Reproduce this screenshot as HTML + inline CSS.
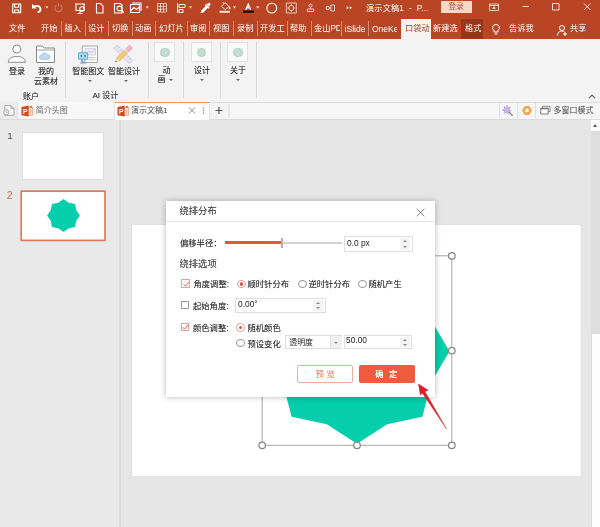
<!DOCTYPE html>
<html lang="zh-CN">
<head>
<meta charset="utf-8">
<title>绕排分布</title>
<style>
html,body{margin:0;padding:0;background:#e6e6e6;}
body{width:600px;height:527px;overflow:hidden;font-family:"Liberation Sans","Noto Sans CJK SC",sans-serif;}
#root{position:relative;width:600px;height:527px;overflow:hidden;background:#e6e6e6;will-change:transform;}
.a{position:absolute;}
.t{position:absolute;white-space:nowrap;line-height:1;}
/* header */
#hdr{left:0;top:0;width:600px;height:39.5px;background:#b94525;}
.tab{position:absolute;top:24.3px;font-size:8.2px;color:#fff;white-space:nowrap;line-height:10px;}
.tsep{position:absolute;top:21px;width:1px;height:15px;background:#d98a73;}
/* ribbon */
#rib{left:0;top:39px;width:600px;height:63px;background:#f3f3f3;}
.rl{position:absolute;text-shadow:0 0 .5px rgba(0,0,0,.4);font-size:8px;color:#333;white-space:nowrap;line-height:10px;text-align:center;}
.rsep{position:absolute;top:42px;width:1px;height:56px;background:#d8d8d8;}
.ibox{position:absolute;top:42px;width:21px;height:19.500px;background:#fafafa;border:1px solid #e2e2e2;box-sizing:border-box;}
.ibox i{position:absolute;left:5px;top:4.500px;width:9.500px;height:9.500px;border-radius:50%;background:#c3dfd2;border:1px solid #a9cdbd;box-sizing:border-box;}
.dd{position:absolute;width:0;height:0;border-left:2px solid transparent;border-right:2px solid transparent;border-top:2.5px solid #666;}
/* doc tabs */
#dtb{left:0;top:102px;width:600px;height:17px;background:#f4f4f4;border-bottom:1px solid #dadada;}
/* dialog */
#dlg{left:166px;top:201px;width:268.600px;height:195.700px;background:#fff;box-shadow:0 0 6px rgba(0,0,0,.28);}
.dl{position:absolute;text-shadow:0 0 .5px rgba(0,0,0,.35);font-size:8.3px;color:#2b2b2b;white-space:nowrap;line-height:10px;}
.cb{position:absolute;width:8.5px;height:8.5px;border:1px solid #9a9a9a;box-sizing:border-box;background:#fff;}
.cb.on{border-color:#dda59c;}
.rd{position:absolute;width:8.5px;height:8.5px;border:1px solid #999;border-radius:50%;box-sizing:border-box;background:#fff;}
.rd.on{border-color:#d9a39b;}
.rd.on::after{content:"";position:absolute;left:1.5px;top:1.5px;width:3.5px;height:3.5px;border-radius:50%;background:#e5553f;}
.sp{position:absolute;height:15px;border:1px solid #dfdfdf;box-sizing:border-box;background:#fff;font-size:8.600px;color:#222;line-height:13px;}
.sp span{position:absolute;left:3px;top:0;}
.sp .nm{font-size:9.300px;transform:scaleX(.9);transform-origin:0 50%;}
.sb{position:absolute;top:1px;bottom:1px;width:10px;background:#f4f4f4;}
.au,.ad{position:absolute;width:0;height:0;border-left:2.100px solid transparent;border-right:2.100px solid transparent;}
.au{border-bottom:2.700px solid #8a8a8a;}
.ad{border-top:2.700px solid #8a8a8a;}
</style>
</head>
<body>
<div id="root">

<!-- ================= HEADER ================= -->
<div id="hdr" class="a"></div>
<svg class="a" style="left:0;top:0" width="600" height="18" viewBox="0 0 600 18" fill="none" stroke="#fff" stroke-width="1.1">
  <!-- save -->
  <path d="M12.700 4h8v8.800h-8z M14.700 4v3.300h4v-3.300 M14.700 12.800v-2.800h4v2.800"/>
  <!-- undo -->
  <path d="M33.500 7c3-2 6.800-1 7 2.300c0 1.800-1.300 2.900-3 3" stroke-width="1.800"/>
  <path d="M32 3.800v4.700h4.700z" fill="#fff" stroke="none"/>
  <path d="M45.300 6.500h3l-1.500 2z" fill="#fff" stroke="none"/>
  <!-- redo dim -->
  <path d="M60.5 5a3.6 3.6 0 1 1-4 0 M58.5 3v3.5" stroke="#cf7e66" stroke-width="1.1"/>
  <!-- slideshow -->
  <path d="M75 4h10 M76 4.5v6h8v-6 M80 10.5v2.5 M77.5 13.5h5" />
  <circle cx="82" cy="9" r="2.3"/>
  <!-- new doc -->
  <path d="M96.5 3.5h4l2.5 2.5v7h-6.5z"/>
  <!-- preview -->
  <path d="M114.5 3.5h6l1.5 1.5v8h-7.500z"/>
  <circle cx="119.5" cy="8.500" r="2.400"/>
  <path d="M121.3 10.300l2.500 2.500" stroke-width="1.4"/>
  <!-- image icon -->
  <path d="M130.500 4.500h9v8h-9z M132 3h9v8 M131 10.500l3-3 2.500 2 3-2.500"/>
  <path d="M145.800 6.500h3l-1.500 2z" fill="#fff" stroke="none"/>
  <!-- grid -->
  <path d="M157.500 3.500h9v8.500h-9z M157.500 6.300h9 M157.500 9.200h9 M160.500 3.500v8.500 M163.500 3.500v8.500" stroke-width=".8" stroke-opacity=".8"/>
  <!-- align flag -->
  <path d="M177.500 3v10 M179 4.500h6v3h-6z M179 9.500h4v3h-4z" stroke-width="1"/>
  <path d="M189 6.500h3l-1.500 2z" fill="#fff" stroke="none"/>
  <!-- pen -->
  <path d="M200.600 13.200l.8-2.800 4.800-4.800 2 2-4.800 4.800z" fill="#fff" stroke="none"/><path d="M206.800 4.400l1.300-1.300a1.500 1.500 0 0 1 2.100 2.100l-1.300 1.300z" fill="#fff" stroke="none"/><path d="M205.300 4.300l4 4" stroke-width="1.300"/>
  <!-- bucket -->
  <path d="M221.500 6.300l3.600-3.600 3.800 3.800-3.600 3.200z M224 3.800l-1-1.600" stroke-width=".9" stroke-opacity=".9"/>
  <path d="M229.600 6.300c.7 1.100 .9 1.600 .9 2.100a.9 .9 0 0 1-1.800 0c0-.5.200-1 .9-2.100z" fill="#fff" fill-opacity=".9" stroke="none"/>
  <path d="M219.500 10.800h10.300v2h-10.300z" fill="#f7e4d9" stroke="none"/>
  <path d="M233 6.500h3l-1.500 2z" fill="#fff" stroke="none"/>
  <!-- font color A -->
  <path d="M245.800 9.800l2.400-5.600 2.400 5.600 M246.800 7.900h2.800" stroke-width="1.300"/>
  <path d="M243 10.500h10.800v2.300h-10.800z" fill="#1a0a06" stroke="none"/>
  <path d="M256.200 6.500h3l-1.500 2z" fill="#fff" stroke="none"/>
  <!-- circle -->
  <circle cx="271.800" cy="8.100" r="4.900"/>
  <!-- focus icon -->
  <g stroke-opacity=".85" stroke-width=".8"><path d="M286.300 3h10v10h-10z"/><rect x="289" y="5.700" width="4.600" height="4.600" rx="1.200"/>
  <path d="M291.300 4v1.700 M291.300 10.300v1.700 M287.300 8h1.700 M293.600 8h1.700"/></g>
  <!-- org icon -->
  <g stroke-opacity=".9" stroke-width=".8"><circle cx="310.500" cy="5.400" r="1.500"/>
  <path d="M307.300 11.500v-2.500h6.400v2.500z M310.500 7v2"/></g>
  <!-- link icon -->
  <path d="M326.300 6.500h2.700v3h-2.700z M330.800 5h3.700v6h-3.700z M329 8h1.800" stroke-width=".8" stroke-opacity=".9"/>
  <!-- more -->
  <path d="M346.800 6.200l2 1.600-2 1.600z M349.800 6.200l2 1.600-2 1.600z" fill="#fff" stroke="none"/>
  <!-- ribbon display -->
  <path d="M489.500 4h9v6.500h-9z M489.500 5.500h9" stroke-width=".8" stroke-opacity=".9"/>
  <path d="M494 6.300l1.800 2.400h-3.600z" fill="#fff" stroke="none"/>
  <!-- window controls -->
  <path d="M522.500 6.500h6.500" stroke-width=".9" stroke-opacity=".9"/>
  <path d="M552.500 3.500h6.500v6.500h-6.500z" stroke-width=".9" stroke-opacity=".9"/>
  <path d="M584 3.500l6.500 6.500 M590.500 3.500l-6.500 6.500" stroke-width=".9" stroke-opacity=".9"/>
</svg>
<div class="t" style="left:366px;top:3.5px;font-size:8.2px;color:#fff;line-height:10px;word-spacing:2.5px;letter-spacing:.15px;">演示文稿1 - P...</div>
<div class="a" style="left:440.600px;top:1px;width:31px;height:12px;background:#fbd7c8;"></div>
<div class="t" style="left:448.200px;top:2.300px;font-size:7.900px;color:#bd5234;line-height:10px;">登录</div>

<!-- ribbon tabs -->
<div class="tab" style="left:9px">文件</div>
<div class="tab" style="left:41px">开始</div>
<div class="tsep" style="left:61px"></div>
<div class="tab" style="left:64.500px">插入</div>
<div class="tsep" style="left:85px"></div>
<div class="tab" style="left:88px">设计</div>
<div class="tsep" style="left:108px"></div>
<div class="tab" style="left:112px">切换</div>
<div class="tsep" style="left:132px"></div>
<div class="tab" style="left:135px">动画</div>
<div class="tsep" style="left:155px"></div>
<div class="tab" style="left:159px">幻灯片</div>
<div class="tsep" style="left:187px"></div>
<div class="tab" style="left:190px">审阅</div>
<div class="tsep" style="left:209px"></div>
<div class="tab" style="left:213px">视图</div>
<div class="tsep" style="left:233px"></div>
<div class="tab" style="left:237px">录制</div>
<div class="tsep" style="left:257px"></div>
<div class="tab" style="left:260px">开发工</div>
<div class="tsep" style="left:287px"></div>
<div class="tab" style="left:290px">帮助</div>
<div class="tsep" style="left:311px"></div>
<div class="tab" style="left:314px;width:26px;overflow:hidden">金山PD</div>
<div class="tsep" style="left:341px"></div>
<div class="tab" style="left:344.500px;font-size:8.600px">iSlide</div>
<div class="tsep" style="left:368px"></div>
<div class="tab" style="left:372px;width:25px;overflow:hidden;font-size:8.500px">OneKe</div>
<div class="a" style="left:400.5px;top:19px;width:30.5px;height:21px;background:#f5f2f1;"></div>
<div class="tab" style="left:405px;color:#9c3a1f;width:24px;overflow:hidden;">口袋动</div>
<div class="tab" style="left:433px">新建选</div>
<div class="a" style="left:461px;top:19px;width:22px;height:20.500px;background:#9a3519;"></div>
<div class="tab" style="left:465px">格式</div>
<svg class="a" style="left:488px;top:21.500px" width="112" height="18" viewBox="0 0 112 18" fill="none" stroke="#fff" stroke-width="1">
  <path d="M8 2.500a3.300 3.300 0 0 1 2 6v1.500h-4v-1.500a3.300 3.300 0 0 1 2-6z M6.500 12h3"/>
  <circle cx="74" cy="6" r="2.500"/>
  <path d="M69.500 13.500c0-3 2-4.500 4.500-4.500 1 0 2 .300 2.500.800 M77 10v4 M75 12h4"/>
</svg>
<div class="tab" style="left:509px">告诉我</div>
<div class="tab" style="left:570px">共享</div>

<!-- ================= RIBBON ================= -->
<div id="rib" class="a"></div>
<svg class="a" style="left:0;top:39px" width="150" height="30" viewBox="0 39 150 30" fill="none">
  <!-- person -->
  <circle cx="16.800" cy="49" r="4" stroke="#8a8a8a" fill="#fff" stroke-width="1"/>
  <path d="M8.300 62.300c0-4 3.500-5.800 8.500-5.800s8.500 1.800 8.500 5.800z" stroke="#8a8a8a" fill="#fff" stroke-width="1"/>
  <!-- folder -->
  <path d="M36.500 62.500v-16.500h6l1.500 2h10.500v14.500z" stroke="#8a8a8a" fill="#fdfdfd" stroke-width="1"/>
  <path d="M36.500 50h18" stroke="#8a8a8a" stroke-width=".8"/>
  <path d="M41 59.500a2.300 2.300 0 0 1 .6-4.500 3 3 0 0 1 5.600-.500 2.600 2.600 0 0 1 1.300 5z" fill="#bcd6ee" stroke="#9dbfe0" stroke-width=".6"/>
  <!-- smart pic -->
  <path d="M82.300 46h15.200v16.500h-15.200z" fill="#fff" stroke="#9c9c9c" stroke-width=".9"/>
  <path d="M85 48.400h10.600v6.600h-10.600z" fill="#ece9f6" stroke="#b3aed0" stroke-width=".5"/>
  <path d="M85.500 53.500l3-2.500 2.500 1.500 4-3" fill="none" stroke="#a9a3cc" stroke-width=".5"/>
  <path d="M88.500 57.500h7 M88.500 59.800h7" stroke="#b4b4b4" stroke-width=".8"/>
  <path d="M78.700 52.800h9v6.400h-9z" fill="#aadcf1" stroke="#5b9fcc" stroke-width=".9"/>
  <circle cx="81.400" cy="55.900" r=".9" fill="#2f6d96"/><circle cx="85" cy="55.900" r=".9" fill="#2f6d96"/>
  <path d="M81.500 59.200v2.800h3.400v-2.800 M80 63h6.400" fill="none" stroke="#5b9fcc" stroke-width=".9"/>
  <!-- smart design -->
  <g transform="translate(123.300 54.300) rotate(45)">
    <rect x="-10.800" y="-2.400" width="21.600" height="4.800" fill="#e6e4f3" stroke="#b6b1d4" stroke-width=".5"/>
    <path d="M-8 -2.400v2 M-5 -2.400v2 M-2 -2.400v2 M5 -2.400v2 M8 -2.400v2" stroke="#b6b1d4" stroke-width=".5"/>
  </g>
  <g transform="translate(123.300 54.300) rotate(-45)">
    <rect x="5.500" y="-2.200" width="5.500" height="4.400" rx=".8" fill="#f3b4c6" stroke="#d990a8" stroke-width=".4"/>
    <rect x="3.500" y="-2.200" width="2" height="4.400" fill="#d9d6ea"/>
    <rect x="-7.500" y="-2.200" width="11" height="4.400" fill="#f6c874" stroke="#dca94e" stroke-width=".4"/>
    <path d="M-7.500 -2.200l-3.500 2.200 3.500 2.200z" fill="#f8e6c6" stroke="#d4b98a" stroke-width=".3"/>
    <path d="M-9.600 -.900l-1.700 .900 1.700 .900z" fill="#666"/>
  </g>
</svg>
<div class="rl" style="left:9px;top:67px;">登录</div>
<div class="rl" style="left:34px;top:67px;width:24px;">我的<br>云素材</div>
<div class="rl" style="left:23px;top:91.500px;color:#3c3c3c;">账户</div>
<div class="rsep" style="left:64.500px"></div>
<div class="rl" style="left:72.200px;top:67px;">智能图文</div>
<div class="rl" style="left:108px;top:67px;">智能设计</div>
<div class="dd" style="left:88px;top:80px"></div>
<div class="dd" style="left:123.500px;top:80px"></div>
<div class="rl" style="left:92.500px;top:91.300px;color:#3c3c3c;">AI 设计</div>
<div class="rsep" style="left:147.500px"></div>
<div class="ibox" style="left:154px"><i></i></div>
<div class="rl" style="left:162.500px;top:65.500px;">动</div>
<div class="rl" style="left:157.500px;top:75.200px;">画</div>
<div class="dd" style="left:168.500px;top:78.800px"></div>
<div class="rsep" style="left:183px"></div>
<div class="ibox" style="left:190.500px"><i></i></div>
<div class="rl" style="left:194px;top:65.500px;">设计</div>
<div class="dd" style="left:199.500px;top:78.500px"></div>
<div class="rsep" style="left:219.500px"></div>
<div class="ibox" style="left:227px"><i></i></div>
<div class="rl" style="left:230px;top:65.500px;">关于</div>
<div class="dd" style="left:236px;top:78.500px"></div>
<div class="rsep" style="left:256px"></div>
<svg class="a" style="left:588px;top:93px" width="8" height="7" viewBox="0 0 8 7" fill="none" stroke="#6a6a6a" stroke-width="1.100"><path d="M1 5l3-3 3 3"/></svg>

<!-- ================= DOC TABS ================= -->
<div id="dtb" class="a"></div>
<div class="a" style="left:229.500px;top:102px;width:370.500px;height:17px;background:#f6f6f6;"></div>
<div class="a" style="left:0;top:101.700px;width:600px;height:1px;background:#dcdcdc;"></div>
<div class="a" style="left:0;top:102px;width:17px;height:17px;background:#ececec;"></div>
<svg class="a" style="left:2px;top:104px" width="14" height="13" viewBox="2 104 14 13" fill="none" stroke="#a2a2a2" stroke-width=".9">
  <path d="M4.800 105.600h6.200l3 3v6.800h-9.200z M11 105.600v3h3" fill="#f6f6f6"/><circle cx="6.300" cy="112.200" r="2.600" fill="#f4f4f4"/><path d="M6.300 110.800v1.500h1.300" stroke-width=".7"/>
</svg>
<div class="a" style="left:17px;top:102px;width:97px;height:17px;background:#f8f8f8;border-left:1px solid #e0e0e0;box-sizing:border-box;"></div>
<svg class="a" style="left:20.500px;top:104.500px" width="12" height="12" viewBox="-.5 0 12 12"><rect x="6" y="2.300" width="4.800" height="8" fill="#fbe9e2" stroke="#ee8a66" stroke-width=".7"/><rect x="8.600" y="4.800" width="1" height="4" fill="#f0a588"/><circle cx="9.600" cy="1.900" r="1.100" fill="#e8693f"/><path d="M0 2l7.200-1.400v11l-7.200-1.400z" fill="#d6481f"/><text x="1.300" y="8.900" font-size="7.200" font-weight="bold" fill="#fff" font-family="Liberation Sans,sans-serif">P</text></svg>
<div class="t" style="left:35.800px;top:105.500px;font-size:8px;color:#6a6a6a;line-height:10px;">简介头图</div>
<div class="a" style="left:114px;top:102.300px;width:96px;height:17.700px;background:#fff;border-top:1.200px solid #e69a78;box-sizing:border-box;border-left:1px solid #e3e3e3;border-right:1px solid #e3e3e3;"></div>
<svg class="a" style="left:117px;top:104.500px" width="12" height="12" viewBox="-.5 0 12 12"><rect x="6" y="2.300" width="4.800" height="8" fill="#fbe9e2" stroke="#ee8a66" stroke-width=".7"/><rect x="8.600" y="4.800" width="1" height="4" fill="#f0a588"/><circle cx="9.600" cy="1.900" r="1.100" fill="#e8693f"/><path d="M0 2l7.200-1.400v11l-7.200-1.400z" fill="#d6481f"/><text x="1.300" y="8.900" font-size="7.200" font-weight="bold" fill="#fff" font-family="Liberation Sans,sans-serif">P</text></svg>
<div class="t" style="left:131px;top:105.500px;font-size:8px;color:#444;line-height:10px;">演示文稿1</div>
<svg class="a" style="left:187px;top:104px" width="46" height="13" viewBox="0 0 46 13" fill="none" stroke="#777" stroke-width=".9">
  <path d="M2 3.500l6 6 M8 3.500l-6 6"/>
  <path d="M16.500 3.500v1.200 M16.500 6v1.200 M16.500 8.500v1.200" stroke-width="1.200"/>
  <path d="M28.500 6.500h7 M32 3v7" stroke="#555" stroke-width="1.200"/>
  <path d="M42 0v13" stroke="#d5d5d5" stroke-width="1"/>
</svg>
<div class="a" style="left:499px;top:103px;width:1px;height:15px;background:#e0e0e0;"></div>
<div class="a" style="left:517px;top:103px;width:1px;height:15px;background:#e0e0e0;"></div>
<div class="a" style="left:535px;top:103px;width:1px;height:15px;background:#e0e0e0;"></div>
<svg class="a" style="left:502px;top:104px" width="50" height="13" viewBox="0 0 50 13" fill="none">
  <path d="M5 1.300l1 2.300 2.500-.5-1.300 2.200 1.800 1.800-2.500.3-.3 2.500-1.800-1.800-2.200 1.300.5-2.500-2.300-1 2.300-1-.5-2.500 2.200 1.300z" fill="#cbb6e8" stroke="#a88dd2" stroke-width=".5"/>
  <path d="M6.800 7.800l3.800 3.800" stroke="#77707f" stroke-width="1.200"/>
  <polygon points="29.50,6.50 27.25,10.40 22.75,10.40 20.50,6.50 22.75,2.60 27.25,2.60" fill="#f3a555" stroke="#f3a555" stroke-width="1" stroke-linejoin="round"/>
  <circle cx="25" cy="6.500" r="1.900" fill="#fdf3e6"/>
  <path d="M40.500 4v-1.700h7.500v5.200h-1.500" stroke="#7a7a7a" stroke-width=".9"/>
  <path d="M38.800 4.300h7.400v5.700h-7.400z" fill="#fff" stroke="#6e6e6e" stroke-width=".9"/>
  <path d="M38.800 4.600h7.400" stroke="#6e6e6e" stroke-width="1.300"/>
</svg>
<div class="t" style="left:553.500px;top:105.500px;font-size:8px;color:#444;line-height:10px;">多窗口模式</div>

<!-- ================= MAIN ================= -->
<div class="a" style="left:0;top:120px;width:119px;height:407px;background:#e9e9ea;"></div>
<div class="a" style="left:119px;top:120px;width:2px;height:407px;background:#dbdbdb;"></div>
<div class="t" style="left:7.300px;top:131.200px;font-size:9.800px;color:#505050;">1</div>
<div class="a" style="left:22.800px;top:132.700px;width:80.600px;height:46px;background:#fff;outline:.5px solid #dedede;"></div>
<div class="t" style="left:6.700px;top:190.200px;font-size:10.500px;color:#d2704f;">2</div>
<svg class="a" style="left:19px;top:189px" width="89" height="54" viewBox="19 189 89 54"><rect x="21.200" y="191.200" width="83.800" height="49.200" fill="#fff" stroke="#df7a59" stroke-width="1.700"/></svg>
<svg class="a" style="left:43px;top:195px" width="41" height="41" viewBox="-20.500 -20.500 41 41"><path d="M16.40 0.00L12.75 5.28L11.60 11.60L5.28 12.75L0.00 16.40L-5.28 12.75L-11.60 11.60L-12.75 5.28L-16.40 0.00L-12.75 -5.28L-11.60 -11.60L-5.28 -12.75L-0.00 -16.40L5.28 -12.75L11.60 -11.60L12.75 -5.28z" fill="#05ceac"/></svg>

<!-- scrollbar -->
<div class="a" style="left:591.400px;top:120px;width:8.600px;height:11px;background:#fdfdfd;"></div>
<div class="a" style="left:591.400px;top:131px;width:8.600px;height:203px;background:#dedede;"></div>
<div class="a" style="left:591.400px;top:334px;width:8.600px;height:193px;background:#fdfdfd;"></div>
<div class="a" style="left:591px;top:334px;width:.8px;height:193px;background:#dadada;"></div>
<div class="a" style="left:593.300px;top:124.300px;width:0;height:0;border-left:2.600px solid transparent;border-right:2.600px solid transparent;border-bottom:3.200px solid #5a5a5a;"></div>

<!-- slide -->
<svg class="a" style="left:130px;top:223px" width="453" height="255" viewBox="130 223 453 255"><rect x="131.700" y="224.500" width="449.400" height="252.200" fill="#fff" stroke="#d6d6d6" stroke-width=".6"/></svg>
<svg class="a" style="left:240px;top:240px" width="230" height="220" viewBox="240 240 230 220">
  <path d="M449.5 351.3L431.4 382.1L422.4 416.7L387.2 424.3L357.0 443.8L326.8 424.3L291.6 416.7L282.6 382.1L264.5 351.3L282.6 320.5L291.6 285.9L326.8 278.3L357.0 258.8L387.2 278.3L422.4 285.9L431.4 320.5z" fill="#05ceac"/>
  <path d="M262.200 255.800h189.600v189.500h-189.600z" fill="none" stroke="#a6a6a6" stroke-width="1"/>
  <g fill="#fff" stroke="#858585" stroke-width="1.250">
    <circle cx="262.200" cy="255.800" r="3.300"/><circle cx="357" cy="255.800" r="3.300"/><circle cx="451.800" cy="255.800" r="3.300"/>
    <circle cx="262.200" cy="350.600" r="3.300"/><circle cx="451.800" cy="350.600" r="3.300"/>
    <circle cx="262.200" cy="445.300" r="3.300"/><circle cx="357" cy="445.300" r="3.300"/><circle cx="451.800" cy="445.300" r="3.300"/>
  </g>
</svg>

<!-- ================= DIALOG ================= -->
<div id="dlg" class="a">
  <div class="dl" style="left:13.500px;top:3.800px;font-size:9.300px;line-height:12px;color:#444;">绕排分布</div>
  <svg class="a" style="left:250px;top:6.500px" width="9" height="9" viewBox="0 0 9 9" stroke="#777" stroke-width=".9" fill="none"><path d="M.7.7l7.600 7.600 M8.300.7l-7.600 7.600"/></svg>
  <div class="a" style="left:0;top:20px;width:269px;height:1px;background:#e6e6e6;"></div>

  <div class="dl" style="left:14px;top:37px;">偏移半径：</div>
  <div class="a" style="left:59px;top:41px;width:117px;height:2px;background:#d2d2d2;"></div>
  <div class="a" style="left:59px;top:40.300px;width:56px;height:3px;background:#e5553f;"></div>
  <div class="a" style="left:114.800px;top:37px;width:2.200px;height:9.500px;background:#b2b2b2;"></div>
  <div class="sp" style="left:177.500px;top:35px;width:69.500px;height:16px;"><span class="nm" style="top:-.2px;left:2.300px">0.0 px</span><b class="sb" style="left:55.500px"></b><i class="au" style="left:58.300px;top:3.300px"></i><i class="ad" style="left:58.300px;top:9.300px"></i></div>

  <div class="dl" style="left:13.500px;top:57px;font-size:9.300px;line-height:12px;color:#444;">绕排选项</div>

  <div class="cb on" style="left:15.200px;top:78.300px;"></div>
  <svg class="a" style="left:15.500px;top:78.500px" width="8" height="8" viewBox="0 0 8 8" fill="none" stroke="#e5553f" stroke-width=".95"><path d="M1.600 4.200l2 2 3.200-4.200"/></svg>
  <div class="dl" style="left:27.500px;top:78px;">角度调整:</div>
  <div class="rd on" style="left:71px;top:78.500px;"></div>
  <div class="dl" style="left:81.500px;top:78px;">顺时针分布</div>
  <div class="rd" style="left:132px;top:78.500px;"></div>
  <div class="dl" style="left:142.500px;top:78px;">逆时针分布</div>
  <div class="rd" style="left:192px;top:78.500px;"></div>
  <div class="dl" style="left:202.500px;top:78px;">随机产生</div>

  <div class="cb" style="left:14.800px;top:99.500px;"></div>
  <div class="dl" style="left:27px;top:99.500px;">起始角度:</div>
  <div class="sp" style="left:68.500px;top:96.500px;width:91px;height:15px;"><span class="nm" style="top:-.3px;left:2.500px">0.00°</span><b class="sb" style="left:77.500px"></b><i class="au" style="left:80.300px;top:3.300px"></i><i class="ad" style="left:80.300px;top:8.800px"></i></div>

  <div class="cb on" style="left:14.800px;top:121.500px;"></div>
  <svg class="a" style="left:15px;top:121.500px" width="8" height="8" viewBox="0 0 8 8" fill="none" stroke="#e5553f" stroke-width=".95"><path d="M1.600 4.200l2 2 3.200-4.200"/></svg>
  <div class="dl" style="left:27px;top:121.500px;">颜色调整:</div>
  <div class="rd on" style="left:70px;top:122px;"></div>
  <div class="dl" style="left:81.500px;top:121.500px;">随机颜色</div>
  <div class="rd" style="left:70px;top:137.500px;"></div>
  <div class="dl" style="left:81.500px;top:137.500px;">预设变化</div>
  <div class="sp" style="left:118.500px;top:133.500px;width:57px;height:14.500px;"><span style="font-size:7.900px;left:3.800px;">透明度</span>
    <b class="a" style="left:44px;top:0;width:11px;height:12.500px;background:#f1f1f1;border-left:1px solid #e2e2e2;"></b>
    <i class="ad" style="left:48.500px;top:6px"></i></div>
  <div class="sp" style="left:178px;top:133.500px;width:68px;height:14.500px;"><span class="nm" style="top:-1.700px;left:1.300px">50.00</span><b class="sb" style="left:55px"></b><i class="au" style="left:58px;top:3px"></i><i class="ad" style="left:58px;top:8.500px"></i></div>

  <div class="a" style="left:131px;top:163.500px;width:56px;height:18.500px;border:1px solid #f1ad9d;border-radius:2px;box-sizing:border-box;background:#fff;"></div>
  <div class="dl" style="left:149.500px;top:167.500px;color:#e5705b;font-size:8.500px;letter-spacing:2.500px;text-shadow:none;">预览</div>
  <div class="a" style="left:193px;top:163.500px;width:56px;height:18.500px;border-radius:2px;background:#ee5b3f;"></div>
  <div class="dl" style="left:209.200px;top:167.800px;color:#fff;font-size:8.300px;letter-spacing:5.500px;text-shadow:0 0 .6px #fff;">确定</div>
</div>

<!-- red arrow -->
<svg class="a" style="left:410px;top:378px" width="45" height="58" viewBox="410 378 45 58">
  <path d="M418.500 384L428.200 390.300 424.900 391.600 446.400 428.800 422.500 393.300 420.300 394.900z" fill="#de1f2b" stroke="#de1f2b" stroke-width=".5" stroke-linejoin="round"/>
</svg>

</div>
</body>
</html>
